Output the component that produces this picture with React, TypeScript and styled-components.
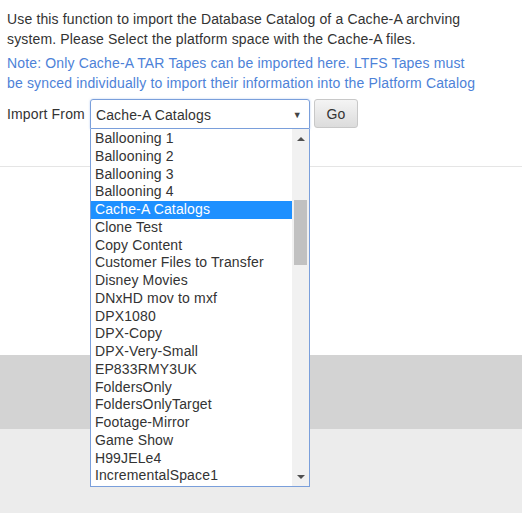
import React from "react";
import styled, { createGlobalStyle } from "styled-components";

const GlobalStyle = createGlobalStyle`
  html, body {
    margin: 0;
    padding: 0;
    background: #ececec;
  }
  body {
    font-family: "Liberation Sans", Arial, sans-serif;
    font-size: 14px;
    line-height: 20px;
    letter-spacing: 0.15px;
    color: #333333;
  }
`;

const Page = styled.div`
  width: 522px;
  height: 513px;
  display: flex;
  flex-direction: column;
  background: #ececec;
  overflow: hidden;
`;

const Panel = styled.div`
  background: #ffffff;
`;

const Body = styled.div`
  padding: 9px 7px 0 7px;
  height: 166px;
  box-sizing: border-box;
  width: 488px;
`;

const Text = styled.p<{ $note?: boolean }>`
  margin: 0 0 4px 0;
  color: ${(p) => (p.$note ? "#4d82d8" : "#333333")};
`;

const ImportRow = styled.div`
  display: flex;
  align-items: flex-start;
  margin-top: 6px;
`;

const Label = styled.span`
  line-height: 20px;
  padding-top: 5px;
  margin-right: 5px;
`;

const SelectWrap = styled.div`
  position: relative;
  width: 220px;
`;

const SelectBox = styled.div`
  height: 30px;
  box-sizing: border-box;
  border: 1px solid #7a9fdb;
  border-radius: 3px 3px 0 0;
  display: flex;
  align-items: center;
  justify-content: space-between;
  padding: 0 6px 0 5px;
  box-shadow: 0 0 2px rgba(102, 150, 230, 0.5);
`;

const SelectText = styled.span`
  padding-top: 2px;
`;

const Caret = styled.span`
  font-size: 9px;
  color: #444;
  margin-right: 1px;
  padding-top: 2px;
`;

const List = styled.div`
  position: absolute;
  top: 30px;
  left: 0;
  width: 220px;
  height: 358px;
  box-sizing: border-box;
  border: 1px solid #7a9fdb;
  border-top: none;
  background: #ffffff;
  display: flex;
  z-index: 10;
`;

const Options = styled.div`
  flex: 1;
  padding-top: 1px;
  overflow: hidden;
`;

const Option = styled.div<{ $active?: boolean }>`
  height: 17.75px;
  line-height: 17.75px;
  padding-left: 4px;
  white-space: nowrap;
  background: ${(p) => (p.$active ? "#1e90ff" : "transparent")};
  color: ${(p) => (p.$active ? "#ffffff" : "#333333")};
`;

const Scrollbar = styled.div`
  width: 17px;
  background: #f1f1f1;
  position: relative;
`;

const Thumb = styled.div`
  position: absolute;
  left: 2px;
  right: 2px;
  top: 71px;
  height: 65px;
  background: #c1c1c1;
`;

const Arrow = styled.div<{ $down?: boolean }>`
  position: absolute;
  left: 5px;
  ${(p) => (p.$down ? "bottom: 7px;" : "top: 8px;")}
  width: 0;
  height: 0;
  border-left: 4px solid transparent;
  border-right: 4px solid transparent;
  ${(p) =>
    p.$down ? "border-top: 4px solid #505050;" : "border-bottom: 4px solid #505050;"}
`;

const GoButton = styled.button`
  margin-left: 4px;
  width: 44px;
  height: 29px;
  border: 1px solid #c8c8c8;
  border-radius: 3px;
  background: linear-gradient(#f4f4f4, #dcdcdc);
  font-family: "Liberation Sans", Arial, sans-serif;
  font-size: 14px;
  letter-spacing: 0.15px;
  color: #333;
  padding: 0;
`;

const Divider = styled.div`
  height: 1px;
  background: #e5e5e5;
`;

const Footer = styled.div`
  height: 188px;
`;

const Band = styled.div`
  height: 74px;
  background: #d3d3d3;
`;

const options = [
  "Ballooning 1",
  "Ballooning 2",
  "Ballooning 3",
  "Ballooning 4",
  "Cache-A Catalogs",
  "Clone Test",
  "Copy Content",
  "Customer Files to Transfer",
  "Disney Movies",
  "DNxHD mov to mxf",
  "DPX1080",
  "DPX-Copy",
  "DPX-Very-Small",
  "EP833RMY3UK",
  "FoldersOnly",
  "FoldersOnlyTarget",
  "Footage-Mirror",
  "Game Show",
  "H99JELe4",
  "IncrementalSpace1",
];

export default function App() {
  const selected = "Cache-A Catalogs";
  return (
    <Page>
      <GlobalStyle />
      <Panel>
        <Body>
          <Text>
            Use this function to import the Database Catalog of a Cache-A archving system. Please
            Select the platform space with the Cache-A files.
          </Text>
          <Text $note>
            Note: Only Cache-A TAR Tapes can be imported here. LTFS Tapes must be synced
            individually to import their information into the Platform Catalog
          </Text>
          <ImportRow>
            <Label>Import From</Label>
            <SelectWrap>
              <SelectBox>
                <SelectText>{selected}</SelectText>
                <Caret>▼</Caret>
              </SelectBox>
              <List>
                <Options>
                  {options.map((o) => (
                    <Option key={o} $active={o === selected}>
                      {o}
                    </Option>
                  ))}
                </Options>
                <Scrollbar>
                  <Arrow />
                  <Thumb />
                  <Arrow $down />
                </Scrollbar>
              </List>
            </SelectWrap>
            <GoButton>Go</GoButton>
          </ImportRow>
        </Body>
        <Divider />
        <Footer />
      </Panel>
      <Band />
    </Page>
  );
}
